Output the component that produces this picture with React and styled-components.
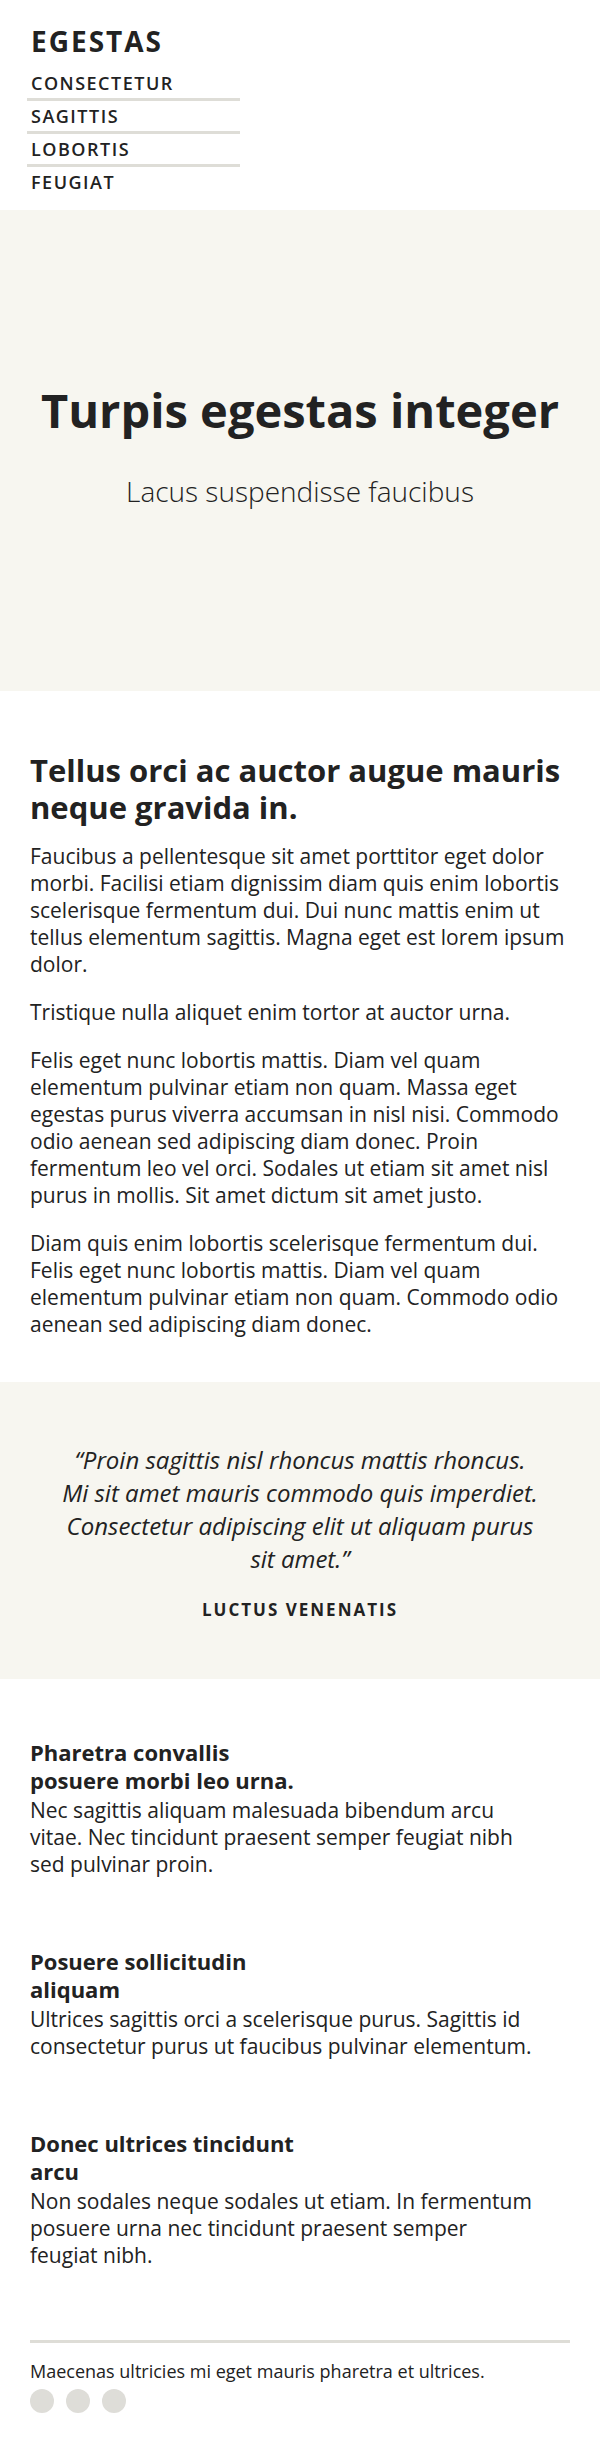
import React from 'react'
import styled, { createGlobalStyle } from 'styled-components'

const GlobalStyle = createGlobalStyle`
  * { box-sizing: border-box; }
  body {
    margin: 0;
    background: #ffffff;
    color: #222222;
    font-family: "Open Sans", "Liberation Sans", sans-serif;
  }
`

const navItems = ['Consectetur', 'Sagittis', 'Lobortis', 'Feugiat']

const features = [
  {
    title: 'Pharetra convallis posuere morbi leo urna.',
    text: 'Nec sagittis aliquam malesuada bibendum arcu vitae. Nec tincidunt praesent semper feugiat nibh sed pulvinar proin.',
  },
  {
    title: 'Posuere sollicitudin aliquam',
    text: 'Ultrices sagittis orci a scelerisque purus. Sagittis id consectetur purus ut faucibus pulvinar elementum.',
  },
  {
    title: 'Donec ultrices tincidunt arcu',
    text: 'Non sodales neque sodales ut etiam. In fermentum posuere urna nec tincidunt praesent semper feugiat nibh.',
  },
]

export default function App() {
  return (
    <>
      <GlobalStyle />
      <Header>
        <Logo>Egestas</Logo>
        <Nav>
          {navItems.map((item) => (
            <NavItem key={item}>{item}</NavItem>
          ))}
        </Nav>
      </Header>

      <Hero>
        <HeroTitle>Turpis egestas integer</HeroTitle>
        <HeroSub>Lacus suspendisse faucibus</HeroSub>
      </Hero>

      <Article>
        <ArticleTitle>Tellus orci ac auctor augue mauris neque gravida in.</ArticleTitle>
        <Text>
          Faucibus a pellentesque sit amet porttitor eget dolor morbi. Facilisi etiam dignissim diam quis enim
          lobortis scelerisque fermentum dui. Dui nunc mattis enim ut tellus elementum sagittis. Magna eget est
          lorem ipsum dolor.
        </Text>
        <Text>Tristique nulla aliquet enim tortor at auctor urna.</Text>
        <Text>
          Felis eget nunc lobortis mattis. Diam vel quam elementum pulvinar etiam non quam. Massa eget egestas purus
          viverra accumsan in nisl nisi. Commodo odio aenean sed adipiscing diam donec. Proin fermentum leo vel orci.
          Sodales ut etiam sit amet nisl purus in mollis. Sit amet dictum sit amet justo.
        </Text>
        <Text>
          Diam quis enim lobortis scelerisque fermentum dui. Felis eget nunc lobortis mattis. Diam vel quam elementum
          pulvinar etiam non quam. Commodo odio aenean sed adipiscing diam donec.
        </Text>
      </Article>

      <QuoteBlock>
        <Quote>
          “Proin sagittis nisl rhoncus mattis rhoncus. Mi sit amet mauris commodo quis imperdiet. Consectetur
          adipiscing elit ut aliquam purus sit amet.”
        </Quote>
        <Author>Luctus venenatis</Author>
      </QuoteBlock>

      <Features>
        {features.map((f) => (
          <Feature key={f.title}>
            <FeatureTitle>{f.title}</FeatureTitle>
            <FeatureText>{f.text}</FeatureText>
          </Feature>
        ))}
      </Features>

      <Footer>
        <FooterText>Maecenas ultricies mi eget mauris pharetra et ultrices.</FooterText>
        <Dots>
          <Dot />
          <Dot />
          <Dot />
        </Dots>
      </Footer>
    </>
  )
}

const Header = styled.header`
  padding: 22px 30px 13px 27px;
`
const Logo = styled.div`
  font-size: 28px;
  font-weight: 700;
  letter-spacing: 2px;
  text-transform: uppercase;
  line-height: 38px;
  padding-left: 4px;
  margin-bottom: 8px;
`
const Nav = styled.ul`
  list-style: none;
  margin: 0;
  padding: 0;
  width: 213px;
`
const NavItem = styled.li`
  font-size: 18px;
  font-weight: 600;
  letter-spacing: 1.5px;
  text-transform: uppercase;
  line-height: 30px;
  padding-left: 4px;
  border-bottom: 3px solid #deddd7;
  &:last-child {
    border-bottom: none;
  }
`
const Hero = styled.section`
  height: 481px;
  background: #f7f6f0;
  display: flex;
  flex-direction: column;
  align-items: center;
  justify-content: center;
  padding: 0 30px 10px;
  text-align: center;
`
const HeroTitle = styled.h1`
  margin: 0;
  font-size: 47px;
  font-weight: 700;
  line-height: 1.2;
  white-space: nowrap;
`
const HeroSub = styled.p`
  margin: 34px 0 0;
  font-size: 28px;
  font-weight: 300;
  line-height: 1.3;
`
const Article = styled.section`
  padding: 61px 30px 44px;
`
const ArticleTitle = styled.h2`
  margin: 0 0 17px;
  font-size: 31px;
  font-weight: 700;
  line-height: 37px;
`
const Text = styled.p`
  margin: 0 0 21px;
  font-size: 21px;
  line-height: 27px;
  &:last-child {
    margin-bottom: 0;
  }
`
const QuoteBlock = styled.section`
  background: #f7f6f0;
  padding: 61px 30px 58px;
  display: flex;
  flex-direction: column;
  align-items: center;
  text-align: center;
`
const Quote = styled.blockquote`
  margin: 0;
  max-width: 477px;
  font-size: 24px;
  font-style: italic;
  font-weight: 400;
  line-height: 33px;
`
const Author = styled.div`
  margin-top: 24px;
  font-size: 17px;
  font-weight: 700;
  letter-spacing: 2px;
  text-transform: uppercase;
  line-height: 22px;
`
const Features = styled.section`
  padding: 59px 30px 0;
  display: flex;
  flex-direction: column;
  gap: 69px;
`
const Feature = styled.div`
  max-width: 506px;
`
const FeatureTitle = styled.h3`
  margin: 0 0 3px;
  max-width: 270px;
  font-size: 22px;
  font-weight: 700;
  line-height: 28px;
`
const FeatureText = styled.p`
  margin: 0;
  font-size: 21px;
  line-height: 27px;
`
const Footer = styled.footer`
  margin: 71px 30px 0;
  border-top: 3px solid #deddd7;
  padding: 16px 0 48px;
`
const FooterText = styled.p`
  margin: 0;
  font-size: 18px;
  line-height: 24px;
`
const Dots = styled.div`
  display: flex;
  gap: 12px;
  margin-top: 6px;
`
const Dot = styled.span`
  width: 24px;
  height: 24px;
  border-radius: 50%;
  background: #deddd8;
`
